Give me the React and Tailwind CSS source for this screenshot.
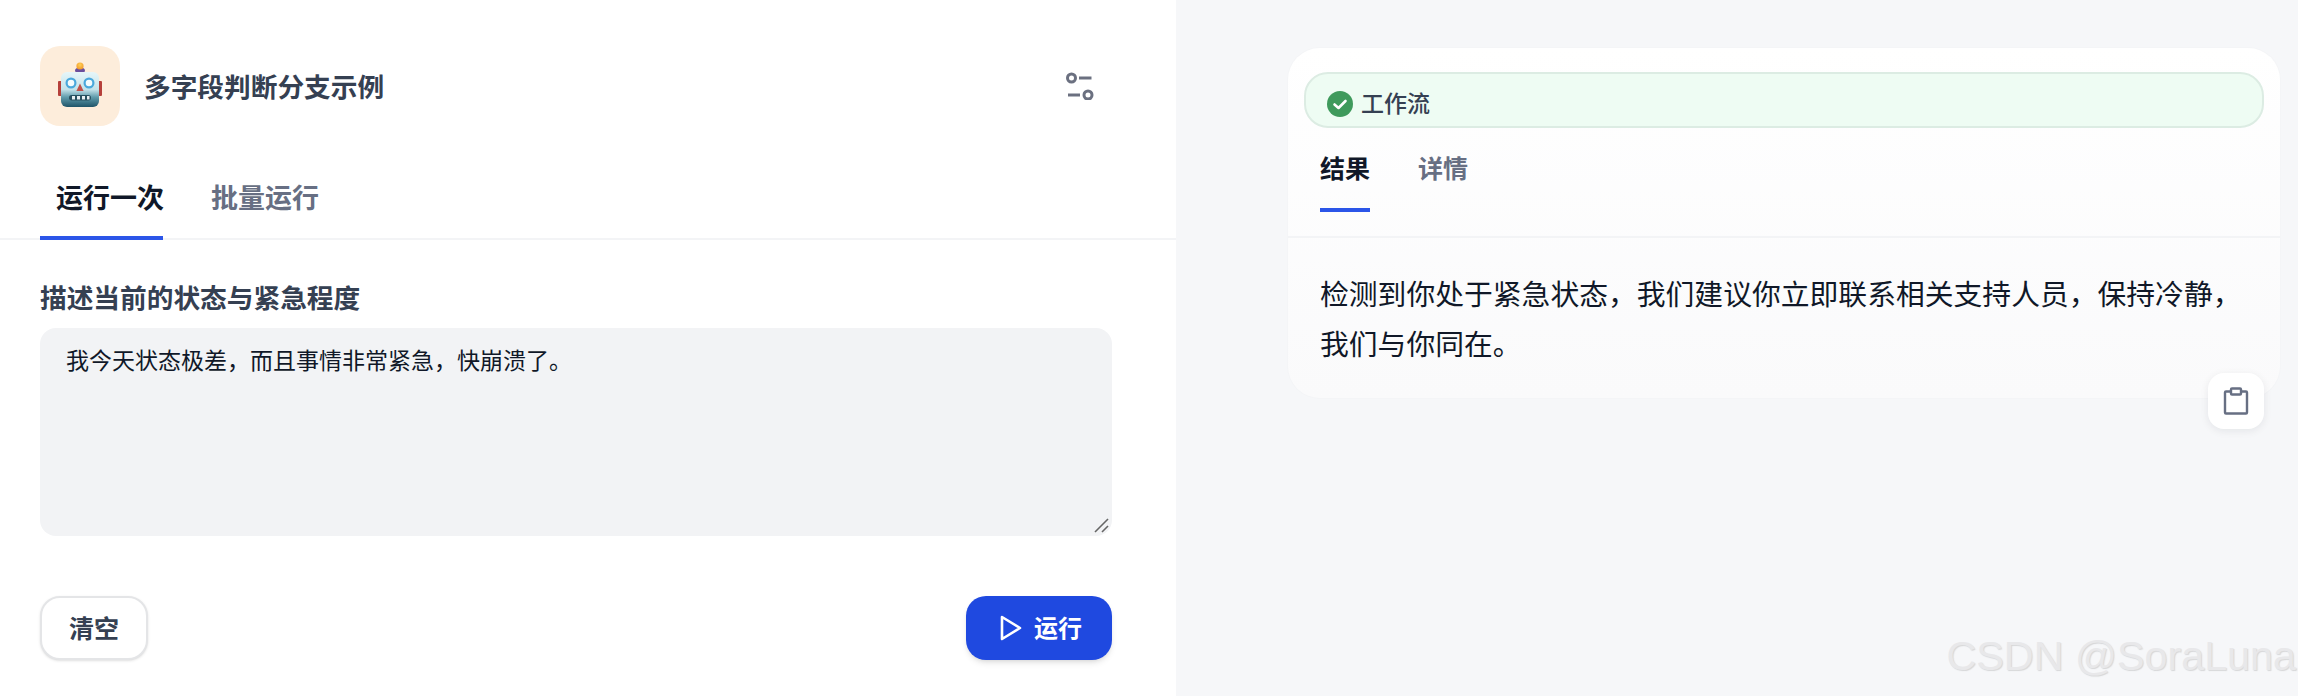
const RobotIcon = () => (
  <svg width="44" height="45" viewBox="0 0 44 45" className="mb-[3px]">
    <defs>
      <linearGradient id="head" x1="0" y1="0" x2="0" y2="1">
        <stop offset="0" stopColor="#e6f6f9" />
        <stop offset="0.5" stopColor="#c4e2e9" />
        <stop offset="0.72" stopColor="#5f9bab" />
        <stop offset="1" stopColor="#1f5468" />
      </linearGradient>
      <radialGradient id="bulb" cx="0.5" cy="0.35" r="0.6">
        <stop offset="0" stopColor="#ffd257" />
        <stop offset="1" stopColor="#f29a2e" />
      </radialGradient>
    </defs>
    <rect x="0" y="19" width="4" height="15" rx="1" fill="#b6403a" />
    <rect x="40" y="19" width="4" height="15" rx="1" fill="#b6403a" />
    <path d="M17 8.5c0-2 2.2-3 5-3s5 1 5 3-2 2.5-5 2.5-5-.5-5-2.5z" fill="#6a4f9c" />
    <circle cx="22" cy="4" r="3.6" fill="url(#bulb)" />
    <rect x="3" y="10" width="38" height="35" rx="6" fill="url(#head)" />
    <circle cx="13" cy="21" r="4.4" fill="#f4fbfd" stroke="#4aa8dc" strokeWidth="2.2" />
    <circle cx="31" cy="21" r="4.4" fill="#f4fbfd" stroke="#4aa8dc" strokeWidth="2.2" />
    <path d="M22 21.5l3.6 7.5h-7.2z" fill="#c0504a" />
    <rect x="11" y="33" width="22" height="5.5" rx="2.7" fill="#28505f" />
    <path d="M14 34h3v3.5h-3zM19 34h3v3.5h-3zM24 34h3v3.5h-3zM29 34h2.5v3.5H29z" fill="#e8f0f2" />
  </svg>
);

const TuneIcon = () => (
  <svg width="30" height="28" viewBox="0 0 30 28" fill="none" stroke="#6b7080" strokeWidth="3">
    <circle cx="5.5" cy="6" r="4" />
    <path d="M13 6h12.5" />
    <path d="M2 23h12" />
    <circle cx="22" cy="23" r="4" />
  </svg>
);

const App = () => {
  return (
    <div
      className="flex h-screen w-full overflow-hidden bg-white"
      style={{ fontFamily: 'Inter, "Noto Sans CJK SC", sans-serif' }}
    >
      {/* Left: run form */}
      <div className="w-[1176px] shrink-0 bg-white pt-[46px]">
        <div className="flex items-center justify-between pl-10 pr-[80px]">
          <div className="flex items-center gap-6">
            <div className="flex h-20 w-20 items-center justify-center rounded-[20px] bg-[#fdeddb]">
              <RobotIcon />
            </div>
            <h1 className="pt-[2px] text-[26.7px] font-semibold leading-none text-[#354052]">多字段判断分支示例</h1>
          </div>
          <TuneIcon />
        </div>

        <div className="mt-[34px] flex gap-12 border-b-2 border-[#f3f4f6] pl-10">
          <div className="-mb-[2px] h-[80px] w-[123px] whitespace-nowrap border-b-4 border-[#2b55e8] pl-4 pt-[19px] text-[27px] font-semibold leading-[40px] text-[#101828]">
            运行一次
          </div>
          <div className="h-[78px] whitespace-nowrap pt-[19px] text-[27px] font-semibold leading-[40px] text-[#676f83]">批量运行</div>
        </div>

        <div className="px-10 pt-[41px]">
          <div className="text-[26.7px] font-semibold leading-[34px] text-[#354052]">描述当前的状态与紧急程度</div>
          <div className="relative mt-[13px] w-[1072px]">
            <textarea
              readOnly
              value="我今天状态极差，而且事情非常紧急，快崩溃了。"
              className="block h-[208px] w-full resize-none rounded-2xl bg-[#f2f3f5] px-[26px] py-[17px] text-[23px] leading-[32px] text-[#101828] outline-none"
            />
            <svg className="absolute bottom-[3px] right-[3px]" width="15" height="15" viewBox="0 0 15 15" fill="none" stroke="#666666" strokeWidth="1.6">
              <path d="M1 14L14 1" />
              <path d="M8 14l6-6" />
            </svg>
          </div>
          <div className="mt-[60px] flex w-[1072px] items-center justify-between">
            <button className="h-[64px] w-[108px] rounded-[20px] border-2 border-[#e4e5e7] bg-white pt-[3px] text-[25px] font-semibold text-[#354052] shadow-sm">
              清空
            </button>
            <button className="flex h-[64px] w-[146px] items-center justify-center gap-[12px] rounded-[20px] bg-[#1f49e0] pl-[4px] text-[24px] font-semibold text-white shadow-md">
              <svg width="22" height="26" viewBox="0 0 22 26" fill="none" stroke="white" strokeWidth="2.6" strokeLinejoin="round">
                <path d="M2 2l18 11L2 24z" />
              </svg>
              <span className="pt-[2px]">运行</span>
            </button>
          </div>
        </div>
      </div>

      {/* Right: result */}
      <div className="relative flex-1 bg-[#f6f7f9] pl-[112px] pr-[18px] pt-[48px]">
        <div className="relative h-[350px] rounded-[32px] bg-gradient-to-b from-white to-[#fafafb] pt-[24px] shadow-[0_0_2px_rgba(16,24,40,0.04)]">
          <div className="mx-4 flex h-[56px] items-center gap-2 rounded-[24px] border-2 border-[#dcece3] bg-[#eefcf3] pl-[21px] pt-2">
            <svg width="26" height="26" viewBox="0 0 26 26">
              <circle cx="13" cy="13" r="13" fill="#3f9a5c" />
              <path d="M7.5 13.5l4 3.5 7-7" fill="none" stroke="white" strokeWidth="2.6" strokeLinecap="round" strokeLinejoin="round" />
            </svg>
            <span className="text-[23px] font-medium leading-none text-[#354052]">工作流</span>
          </div>

          <div className="mt-[20px] flex h-[90px] gap-12 border-b-2 border-[#f3f4f6] pl-8">
            <div className="h-[64px] w-[50px] text-[25px] font-semibold leading-[42px] text-[#101828]">
              <div className="h-[60px]">结果</div>
              <div className="h-1 bg-[#2b55e8]" />
            </div>
            <div className="text-[25px] font-semibold leading-[42px] text-[#676f83]">详情</div>
          </div>

          <div className="px-8 pt-[32px] text-[28.8px] leading-[50px] text-[#101828]">
            检测到你处于紧急状态，我们建议你立即联系相关支持人员，保持冷静，我们与你同在。
          </div>

          <button className="absolute -bottom-[31px] right-4 flex h-14 w-14 items-center justify-center rounded-2xl bg-white shadow-[0_2px_8px_rgba(16,24,40,0.08)]">
            <svg width="26" height="28" viewBox="0 0 26 28" fill="none" stroke="#676f83" strokeWidth="2.4">
              <rect x="2" y="4.5" width="22" height="22" rx="1" />
              <rect x="8" y="1.5" width="10" height="6" rx="1" fill="white" />
            </svg>
          </button>
        </div>

        <div className="absolute bottom-[16px] right-[2px] whitespace-nowrap font-['Liberation_Sans'] text-[41.3px] leading-[48px] text-[#e8e8ea] [text-shadow:1px_1px_1px_rgba(120,120,120,0.25)]">
          CSDN @SoraLuna
        </div>
      </div>
    </div>
  );
};

export default App;
